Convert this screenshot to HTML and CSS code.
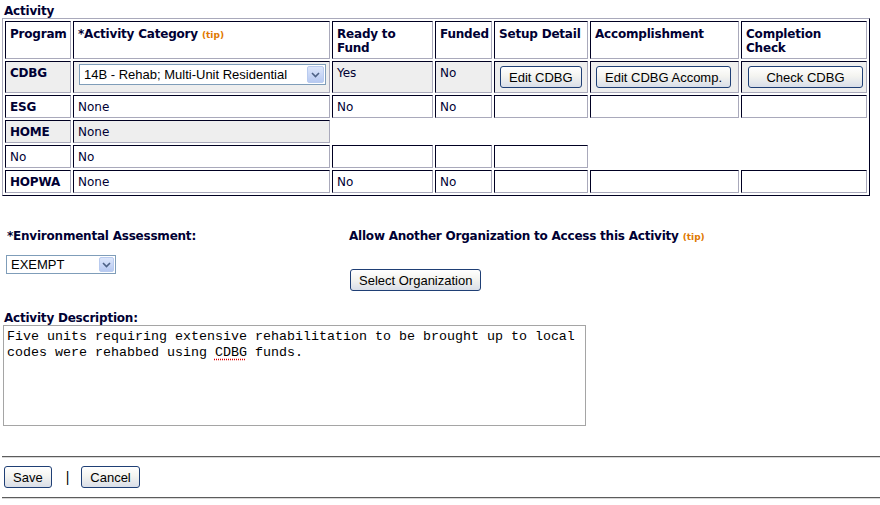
FILE: index.html
```html
<!DOCTYPE html>
<html lang="en">
<head>
    <meta charset="UTF-8">
    <meta name="viewport" content="width=device-width, initial-scale=1.0">
    <title>Activity</title>
    <link rel="stylesheet" href="styles.css">
</head>
<body>
    <h4 class="section-title">Activity</h4>
    <table class="program-grid">
        <colgroup>
            <col class="col-program">
            <col class="col-category">
            <col class="col-ready">
            <col class="col-funded">
            <col class="col-setup">
            <col class="col-accomp">
            <col class="col-check">
        </colgroup>
        <tr class="head">
            <th>Program</th>
            <th>*Activity Category <span class="tip">(tip)</span></th>
            <th>Ready to Fund</th>
            <th>Funded</th>
            <th>Setup Detail</th>
            <th>Accomplishment</th>
            <th>Completion Check</th>
        </tr>
        <tr class="shaded with-controls">
            <th>CDBG</th>
            <td>
                <div class="combo combo-category">
                    <span class="combo-text">14B - Rehab; Multi-Unit Residential</span>
                    <span class="combo-arrow"><svg width="9" height="6" viewBox="0 0 9 6"><path d="M1 1l3.5 3.5L8 1" fill="none" stroke="#4d6185" stroke-width="1.6"/></svg></span>
                </div>
            </td>
            <td>Yes</td>
            <td>No</td>
            <td><button type="button" class="btn">Edit CDBG</button></td>
            <td><button type="button" class="btn">Edit CDBG Accomp.</button></td>
            <td><button type="button" class="btn btn-check">Check CDBG</button></td>
        </tr>
        <tr>
            <th>ESG</th>
            <td>None</td>
            <td>No</td>
            <td>No</td>
            <td></td>
            <td></td>
            <td></td>
        </tr>
        <tr class="shaded">
            <th>HOME</th>
            <td>None</td>
        </tr>
        <tr>
            <td>No</td>
            <td>No</td>
            <td></td>
            <td></td>
            <td></td>
        </tr>
        <tr>
            <th>HOPWA</th>
            <td>None</td>
            <td>No</td>
            <td>No</td>
            <td></td>
            <td></td>
            <td></td>
        </tr>
    </table>

    <div class="options">
        <div class="option-env">
            <p class="field-label">*Environmental Assessment:</p>
            <div class="combo combo-env">
                <span class="combo-text">EXEMPT</span>
                <span class="combo-arrow"><svg width="9" height="6" viewBox="0 0 9 6"><path d="M1 1l3.5 3.5L8 1" fill="none" stroke="#4d6185" stroke-width="1.6"/></svg></span>
            </div>
        </div>
        <div class="option-access">
            <p class="field-label">Allow Another Organization to Access this Activity <span class="tip">(tip)</span></p>
            <button type="button" class="btn">Select Organization</button>
        </div>
    </div>

    <div class="description">
        <p class="field-label">Activity Description:</p>
        <div class="textbox">Five units requiring extensive rehabilitation to be brought up to local codes were rehabbed using <span class="misspelt">CDBG</span> funds.</div>
    </div>

    <hr class="rule rule-top">
    <div class="actions">
        <button type="button" class="btn">Save</button>
        <span class="divider">|</span>
        <button type="button" class="btn">Cancel</button>
    </div>
    <hr class="rule rule-bottom">
</body>
</html>
```

FILE: styles.css
```css
body {
    margin: 0;
    padding: 4px 0 0 2px;
    font-family: "DejaVu Sans", Verdana, sans-serif;
    font-size: 12px;
    line-height: 14px;
    color: #000033;
    background-color: #fff;
}
.section-title {
    margin: 0 0 0 2px;
    font-size: 12px;
    font-weight: bold;
    line-height: 14px;
    letter-spacing: -0.2px;
}
.tip {
    color: #e07800;
    font-size: 9px;
    font-weight: bold;
    line-height: 1;
    letter-spacing: 0;
}

/* program grid */
.program-grid {
    table-layout: fixed;
    box-sizing: border-box;
    width: 868px;
    border-collapse: separate;
    border-spacing: 2px;
    border: 1px solid;
    border-color: #a9a9bb #000022 #000022 #a9a9bb;
}
.col-program { width: 66px; }
.col-category { width: 257px; }
.col-ready { width: 101px; }
.col-funded { width: 57px; }
.col-setup { width: 94px; }
.col-accomp { width: 149px; }
.col-check { width: 126px; }
.program-grid th,
.program-grid td {
    border: 1px solid;
    border-color: #000022 #a9a9bb #a9a9bb #000022;
    padding: 5px 4px 3px;
    vertical-align: top;
    text-align: left;
    line-height: 13px;
}
.program-grid th {
    font-weight: bold;
    letter-spacing: -0.2px;
}
.program-grid .head th {
    line-height: 14px;
}
.program-grid .with-controls th,
.program-grid .with-controls td {
    padding-bottom: 4px;
}
.program-grid .shaded th,
.program-grid .shaded td {
    background-color: #eeeeee;
}

/* xp style combo box */
.combo {
    display: flex;
    align-items: center;
    box-sizing: border-box;
    border: 1px solid #7f9db9;
    background-color: #fff;
    font-family: "Liberation Sans", Arial, sans-serif;
    font-size: 13px;
    color: #000;
}
.combo-text {
    flex: 1;
    padding-left: 4px;
    white-space: nowrap;
}
.combo-arrow {
    display: flex;
    align-items: center;
    justify-content: center;
    box-sizing: border-box;
    margin: 1px;
    border: 1px solid #b9cbef;
    border-radius: 2px;
    background: linear-gradient(#dce6fb, #b7c9f1);
}
.combo-category {
    width: 247px;
    height: 21px;
    margin: -3px 0 0 1px;
}
.combo-category .combo-arrow {
    width: 17px;
    height: 17px;
}
.combo-env {
    width: 110px;
    height: 19px;
    margin: 12px 0 0 -1px;
}
.combo-env .combo-arrow {
    width: 15px;
    height: 15px;
}

.btn {
    height: 22px;
    padding: 0 8px;
    font-family: "Liberation Sans", Arial, sans-serif;
    font-size: 13px;
    color: #000;
    border: 1px solid #1f3f75;
    border-radius: 3px;
    background: linear-gradient(#ffffff, #f4f4f0 45%, #d9dee8);
    cursor: pointer;
}
.program-grid .btn {
    display: block;
    margin: -1px 0 0 1px;
}
.program-grid .btn-check {
    width: 115px;
    margin-left: 2px;
}

/* options */
.options {
    display: flex;
    margin-top: 33px;
    padding-left: 5px;
}
.option-env {
    width: 342px;
}
.field-label {
    margin: 0;
    font-weight: bold;
    letter-spacing: -0.22px;
}
.option-access .btn {
    display: block;
    margin: 26px 0 0 1px;
}

.description {
    margin-top: 20px;
}
.description .field-label {
    padding-left: 2px;
}
.textbox {
    box-sizing: border-box;
    width: 583px;
    height: 101px;
    margin-left: 1px;
    padding: 3px 3px 2px;
    border: 1px solid #a5a5a5;
    font-family: "Liberation Mono", "Courier New", monospace;
    font-size: 13.33px;
    line-height: 16px;
    color: #000;
}
.misspelt {
    text-decoration: underline dotted #e00000;
    text-underline-offset: 3px;
}

.rule {
    margin: 0;
    border: 0;
    border-top: 1px solid #5c5c5c;
    border-bottom: 1px solid #d8d8d8;
}
.rule-top {
    margin-top: 30px;
}
.actions {
    display: flex;
    align-items: center;
    height: 22px;
    margin: 8px 0 9px 2px;
}
.divider {
    margin: 0 12px 0 14px;
    font-family: "Liberation Sans", Arial, sans-serif;
    font-size: 14px;
    line-height: 14px;
    color: #000;
}
```
